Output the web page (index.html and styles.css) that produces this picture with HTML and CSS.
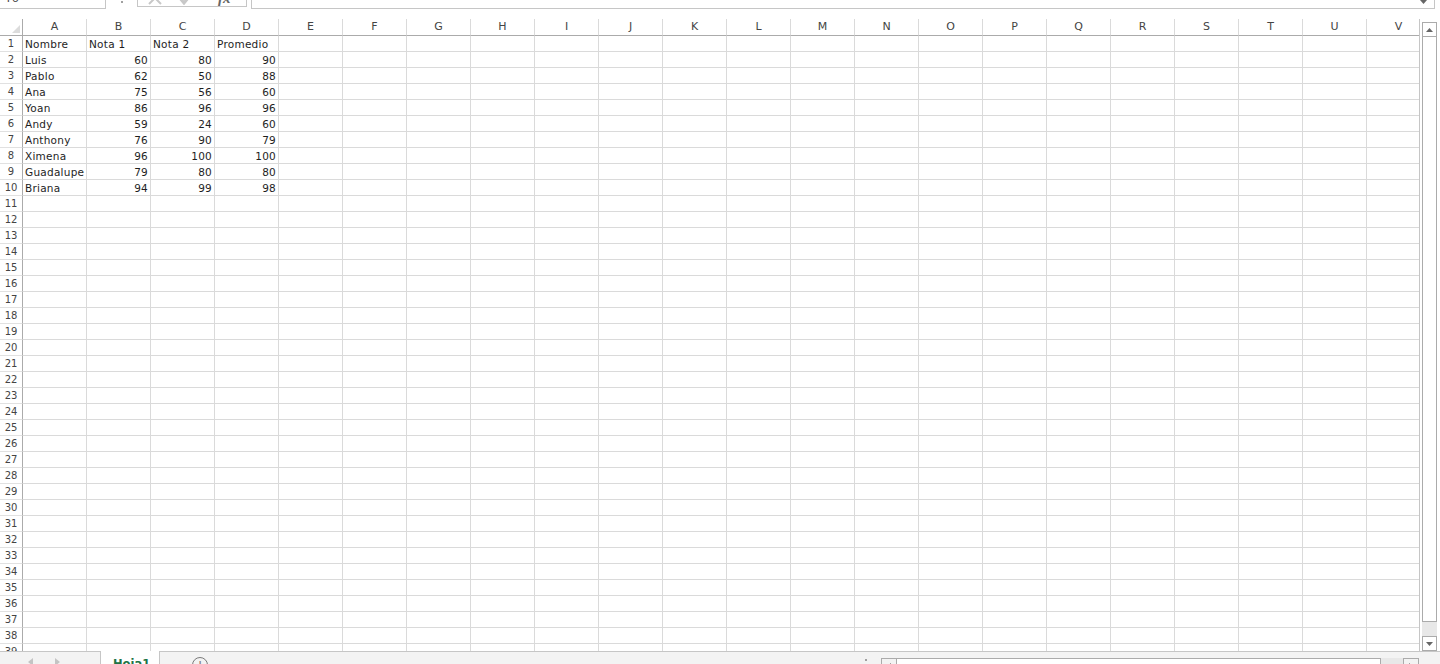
FILE: index.html
```html
<!DOCTYPE html>
<html lang="es">
<head>
    <meta charset="UTF-8">
    <meta name="viewport" content="width=device-width, initial-scale=1.0">
    <title>Libro1 - Hoja1</title>
    <link rel="stylesheet" href="styles.css">
</head>
<body>
    <div class="app">
        <div class="formula-bar">
            <div class="name-box">T6</div>
            <div class="bar-dots"></div>
            <div class="fx-buttons">
                <svg class="fx-icon" width="14" height="14" viewBox="0 0 14 14">
                    <path d="M1 1 L13 13 M13 1 L1 13" stroke="#c8c8c8" stroke-width="2" fill="none"/>
                </svg>
                <svg class="fx-icon" width="16" height="14" viewBox="0 0 16 14">
                    <path d="M1 6 L6 12 L15 1" stroke="#c8c8c8" stroke-width="3" fill="none"/>
                </svg>
                <span class="fx">fx</span>
            </div>
            <div class="formula-input">
                <svg width="7" height="4" viewBox="0 0 7 4"><path d="M0 0 L7 0 L3.5 4 Z" fill="#666"/></svg>
            </div>
        </div>

        <div class="sheet-area">
            <div class="grid-wrap">
                <div class="sheet" id="sheet"></div>
            </div>
            <div class="vscroll">
                <div class="scroll-btn">
                    <svg width="7" height="4" viewBox="0 0 7 4"><path d="M0 4 L7 4 L3.5 0 Z" fill="#666"/></svg>
                </div>
                <div class="vthumb"></div>
                <div class="vtrack"></div>
                <div class="scroll-btn">
                    <svg width="7" height="4" viewBox="0 0 7 4"><path d="M0 0 L7 0 L3.5 4 Z" fill="#666"/></svg>
                </div>
            </div>
        </div>

        <div class="tab-bar">
            <div class="tab-nav">
                <svg width="5" height="8" viewBox="0 0 5 8"><path d="M5 0 L5 8 L0 4 Z" fill="#c4c4c4"/></svg>
                <svg width="5" height="8" viewBox="0 0 5 8"><path d="M0 0 L0 8 L5 4 Z" fill="#c4c4c4"/></svg>
            </div>
            <div class="sheet-tab">Hoja1</div>
            <div class="tab-rest">
                <div class="add-sheet">+</div>
                <div class="split-dots"></div>
                <div class="hscroll">
                    <div class="hbtn">
                        <svg width="4" height="7" viewBox="0 0 4 7"><path d="M4 0 L4 7 L0 3.5 Z" fill="#666"/></svg>
                    </div>
                    <div class="hthumb"></div>
                    <div class="htrack"></div>
                    <div class="hbtn">
                        <svg width="4" height="7" viewBox="0 0 4 7"><path d="M0 0 L0 7 L4 3.5 Z" fill="#666"/></svg>
                    </div>
                </div>
            </div>
        </div>
    </div>

    <script>
        const columns = 'ABCDEFGHIJKLMNOPQRSTUV'.split('');
        const data = [
            ['Nombre', 'Nota 1', 'Nota 2', 'Promedio'],
            ['Luis', 60, 80, 90],
            ['Pablo', 62, 50, 88],
            ['Ana', 75, 56, 60],
            ['Yoan', 86, 96, 96],
            ['Andy', 59, 24, 60],
            ['Anthony', 76, 90, 79],
            ['Ximena', 96, 100, 100],
            ['Guadalupe', 79, 80, 80],
            ['Briana', 94, 99, 98]
        ];
        const sheet = document.getElementById('sheet');

        function addCell(className, text) {
            const cell = document.createElement('div');
            cell.className = className;
            cell.textContent = text;
            sheet.appendChild(cell);
        }

        addCell('corner', '');
        columns.forEach(letter => addCell('col-head', letter));

        for (let r = 1; r <= 39; r++) {
            addCell('row-head', r);
            columns.forEach((letter, i) => {
                const row = data[r - 1];
                const value = row ? row[i] : undefined;
                if (value === undefined) {
                    addCell('cell', '');
                } else {
                    addCell(typeof value === 'number' ? 'cell num' : 'cell', value);
                }
            });
        }
    </script>
</body>
</html>
```

FILE: styles.css
```css
* {
    box-sizing: border-box;
}

body {
    margin: 0;
    background-color: white;
    font-family: "DejaVu Sans", Verdana, sans-serif;
    overflow: hidden;
}

.app {
    width: 1440px;
    height: 664px;
    display: flex;
    flex-direction: column;
    overflow: hidden;
}

/* Formula bar (mostly scrolled off the top) */
.formula-bar {
    height: 19px;
    flex: none;
    display: flex;
    align-items: flex-start;
    overflow: hidden;
}

.name-box {
    width: 106px;
    height: 23px;
    margin-top: -14px;
    border-right: 1px solid #c6c6c6;
    border-bottom: 1px solid #c6c6c6;
    padding-left: 5px;
    font-size: 11px;
    line-height: 26px;
    color: #444;
}

.bar-dots {
    width: 2px;
    height: 2px;
    margin: 1px 0 0 15px;
    background-color: #a0a0a0;
}

.fx-buttons {
    width: 110px;
    height: 22px;
    margin: -15px 0 0 14px;
    border: 1px solid #c6c6c6;
    display: flex;
    align-items: flex-end;
    padding: 0 0 1px 10px;
}

.fx-icon {
    flex: none;
}

.fx-icon + .fx-icon {
    margin-left: 16px;
}

.fx {
    margin-left: 24px;
    font-family: "Liberation Serif", serif;
    font-style: italic;
    font-weight: bold;
    font-size: 15px;
    line-height: 14px;
    color: #666;
}

.formula-input {
    flex: 1;
    height: 24px;
    margin: -15px 5px 0 4px;
    border: 1px solid #c6c6c6;
    display: flex;
    justify-content: flex-end;
    align-items: flex-end;
    padding: 0 7px 4px 0;
}

/* Grid */
.sheet-area {
    flex: none;
    height: 632px;
    display: flex;
}

.grid-wrap {
    width: 1420px;
    height: 632px;
    overflow: hidden;
    border-right: 1px solid #c6c6c6;
}

.sheet {
    display: grid;
    grid-template-columns: 23px repeat(22, 64px);
    grid-template-rows: 17px;
    grid-auto-rows: 16px;
    width: 1431px;
}

.corner {
    border-right: 1px solid #ababab;
    border-bottom: 1px solid #ababab;
    display: flex;
    justify-content: flex-end;
    align-items: flex-end;
    padding: 0 2px 2px 0;
}

.corner::after {
    content: '';
    width: 0;
    height: 0;
    border-left: 8px solid transparent;
    border-bottom: 8px solid #dcdcdc;
}

.col-head {
    border-right: 1px solid #dadada;
    border-bottom: 1px solid #ababab;
    text-align: center;
    font-size: 11px;
    line-height: 16px;
    color: #444;
}

.row-head {
    border-right: 1px solid #ababab;
    border-bottom: 1px solid #e1e1e1;
    padding-top: 1px;
    text-align: center;
    font-size: 10px;
    line-height: 14px;
    color: #444;
}

.cell {
    border-right: 1px solid #dadada;
    border-bottom: 1px solid #dadada;
    padding: 1px 2px 0;
    font-size: 10.5px;
    letter-spacing: 0.25px;
    line-height: 14px;
    color: #1e1e1e;
    white-space: nowrap;
}

.num {
    text-align: right;
}

/* Vertical scrollbar */
.vscroll {
    width: 15px;
    margin: 3px 0 0 2px;
    display: flex;
    flex-direction: column;
}

.scroll-btn {
    height: 15px;
    flex: none;
    border: 1px solid #ababab;
    background-color: #fff;
    display: flex;
    justify-content: center;
    align-items: center;
}

.vthumb {
    height: 585px;
    flex: none;
    border: 1px solid #ababab;
    border-top: none;
    background-color: #fff;
}

.vtrack {
    flex: 1;
    background-color: #e8e8e8;
}

/* Sheet tabs */
.tab-bar {
    flex: 1;
    display: flex;
    background-color: #f3f3f3;
}

.tab-nav {
    width: 100px;
    border-top: 1px solid #c6c6c6;
    display: flex;
    align-items: flex-start;
    padding: 6px 0 0 28px;
    gap: 22px;
}

.sheet-tab {
    width: 60px;
    background-color: #fff;
    border-left: 1px solid #c6c6c6;
    border-right: 1px solid #c6c6c6;
    padding: 6px 0 0 12px;
    font-weight: bold;
    font-size: 11.5px;
    line-height: 14px;
    color: #217346;
}

.tab-rest {
    flex: 1;
    border-top: 1px solid #c6c6c6;
    display: flex;
    align-items: flex-start;
}

.add-sheet {
    width: 16px;
    height: 16px;
    margin: 5px 0 0 32px;
    border: 1px solid #7a7a7a;
    border-radius: 50%;
    text-align: center;
    font-size: 14px;
    line-height: 14px;
    color: #7a7a7a;
}

.split-dots {
    width: 2px;
    height: 2px;
    margin: 7px 14px 0 auto;
    background-color: #a0a0a0;
}

.hscroll {
    width: 538px;
    height: 16px;
    margin: 6px 21px 0 0;
    display: flex;
}

.hbtn {
    width: 16px;
    flex: none;
    border: 1px solid #ababab;
    background-color: #f3f3f3;
    display: flex;
    justify-content: center;
    align-items: center;
}

.hthumb {
    width: 484px;
    flex: none;
    border: 1px solid #ababab;
    border-left: none;
    background-color: #fff;
}

.htrack {
    flex: 1;
    background-color: #e8e8e8;
}
```
